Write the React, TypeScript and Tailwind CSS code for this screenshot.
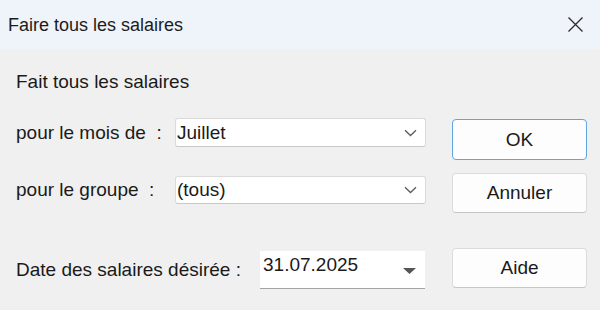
import React from "react";

const font = { fontFamily: '"Liberation Sans", Arial, sans-serif' };

function Chevron() {
  return (
    <svg width="13" height="8" viewBox="0 0 13 8" className="shrink-0">
      <path d="M1 1.2 L6.5 6.5 L12 1.2" fill="none" stroke="#5a5a5a" strokeWidth="1.3" />
    </svg>
  );
}

function Combo({ value }: { value: string }) {
  return (
    <div className="flex h-[29px] w-[251px] items-center justify-between rounded-[3px] border border-[#dadada] border-b-[#c9c9c9] bg-white pl-[1px] pr-[8px]">
      <span className="text-[19px] leading-[22px] text-[#1a1a1a]">{value}</span>
      <Chevron />
    </div>
  );
}

function Btn({ label, primary, className = "" }: { label: string; primary?: boolean; className?: string }) {
  return (
    <div
      className={
        "flex w-[135px] items-center justify-center rounded-[4px] border bg-[#fdfdfd] text-[19px] leading-[22px] text-[#1a1a1a] " +
        (primary ? "border-[#5ea5e4] " : "border-[#dcdcdc] border-b-[#c6c6c6] ") +
        className
      }
    >
      {label}
    </div>
  );
}

export default function App() {
  return (
    <div className="h-[310px] w-[600px] overflow-hidden bg-[#f0f0f0]" style={font}>
      <div className="flex h-[49px] items-center justify-between bg-[#eff3fa] pl-[8px] pr-[17px]">
        <span className="text-[18px] leading-[22px] text-[#1c1c1c]">Faire tous les salaires</span>
        <svg width="15" height="15" viewBox="0 0 15 15">
          <path d="M0.5 0.5 L14.5 14.5 M14.5 0.5 L0.5 14.5" stroke="#2a2a2a" strokeWidth="1.3" />
        </svg>
      </div>
      <div className="flex pl-[16px]">
        <div className="flex w-[410px] flex-col pt-[22px]">
          <div className="text-[19px] leading-[22px] text-[#1a1a1a]">Fait tous les salaires</div>
          <div className="mt-[25px] flex items-center justify-between">
            <span className="whitespace-pre text-[19px] leading-[22px] text-[#1a1a1a]">pour le mois de  :</span>
            <Combo value="Juillet" />
          </div>
          <div className="mt-[29px] flex items-center justify-between">
            <span className="whitespace-pre text-[19px] leading-[22px] text-[#1a1a1a]">pour le groupe  :</span>
            <div className="[&>div]:h-[28px]">
              <Combo value="(tous)" />
            </div>
          </div>
          <div className="mt-[47px] flex items-center">
            <span className="w-[244px] whitespace-pre text-[19px] leading-[22px] text-[#1a1a1a]">Date des salaires désirée :</span>
            <div className="flex h-[38px] w-[165px] items-start justify-between border-b border-[#a3a3a3] bg-white pl-[3px] pr-[9px] pt-[3px]">
              <span className="text-[19px] leading-[22px] text-[#1a1a1a]">31.07.2025</span>
              <svg width="13" height="6" viewBox="0 0 13 6" className="mt-[14px]">
                <path d="M0 0 L13 0 L6.5 6 Z" fill="#555555" />
              </svg>
            </div>
          </div>
        </div>
        <div className="ml-[26px] flex flex-col pt-[70px]">
          <Btn label="OK" primary className="h-[41px]" />
          <Btn label="Annuler" className="mt-[13px] h-[40px]" />
          <Btn label="Aide" className="mt-[35px] h-[40px]" />
        </div>
      </div>
    </div>
  );
}
